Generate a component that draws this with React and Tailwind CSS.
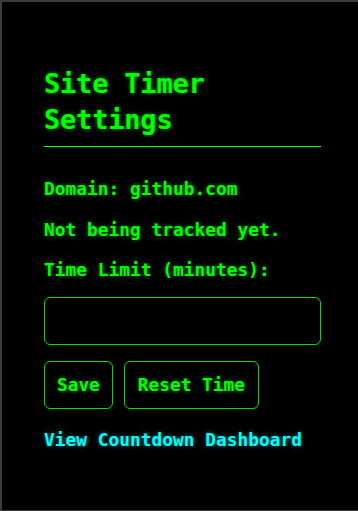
import { useState } from "react";

const App = () => {
  const [limit, setLimit] = useState("");

  return (
    <div
      className="w-[358px] h-[511px] bg-black border-t-2 border-l-2 border-b border-[#3c3c3c] text-[#00ff00]
                 [font-family:'DejaVu_Sans_Mono',monospace] font-bold"
    >
      <div className="pl-[42px] pr-[37px] pt-[64px]">
        {/* Heading */}
        <h1 className="text-[27px] leading-[36px] tracking-[-0.2px] pb-[8px] border-b border-[#00ff00] [text-shadow:0_0_4px_rgba(0,255,0,0.55)]">
          Site Timer
          <br />
          Settings
        </h1>

        {/* Status */}
        <div className="text-[17.8px] leading-[24px] tracking-[0.05px] [text-shadow:0_0_4px_rgba(0,255,0,0.5)]">
          <p className="mt-[30px]">Domain: github.com</p>
          <p className="mt-[17px]">Not being tracked yet.</p>
          <p className="mt-[16px]">Time Limit (minutes):</p>
        </div>

        <input
          type="number"
          value={limit}
          onChange={(e) => setLimit(e.target.value)}
          className="mt-[15px] block w-full h-[48px] bg-black border border-[#00e000] rounded-[6px] px-3
                     text-[#00ff00] text-[17.8px] focus:outline-none"
        />

        {/* Actions */}
        <div className="flex gap-[11px] mt-[16px]">
          <button className="h-[48px] px-[12px] border border-[#00e000] rounded-[6px] text-[17.8px] [text-shadow:0_0_4px_rgba(0,255,0,0.5)]">
            Save
          </button>
          <button className="h-[48px] px-[13px] border border-[#00e000] rounded-[6px] text-[17.8px] [text-shadow:0_0_4px_rgba(0,255,0,0.5)]">
            Reset Time
          </button>
        </div>

        <a
          href="#"
          className="block mt-[19px] text-[17.8px] leading-[24px] tracking-[0.05px] text-[#00ffff] [text-shadow:0_0_4px_rgba(0,255,255,0.5)]"
        >
          View Countdown Dashboard
        </a>
      </div>
    </div>
  );
};

export default App;
